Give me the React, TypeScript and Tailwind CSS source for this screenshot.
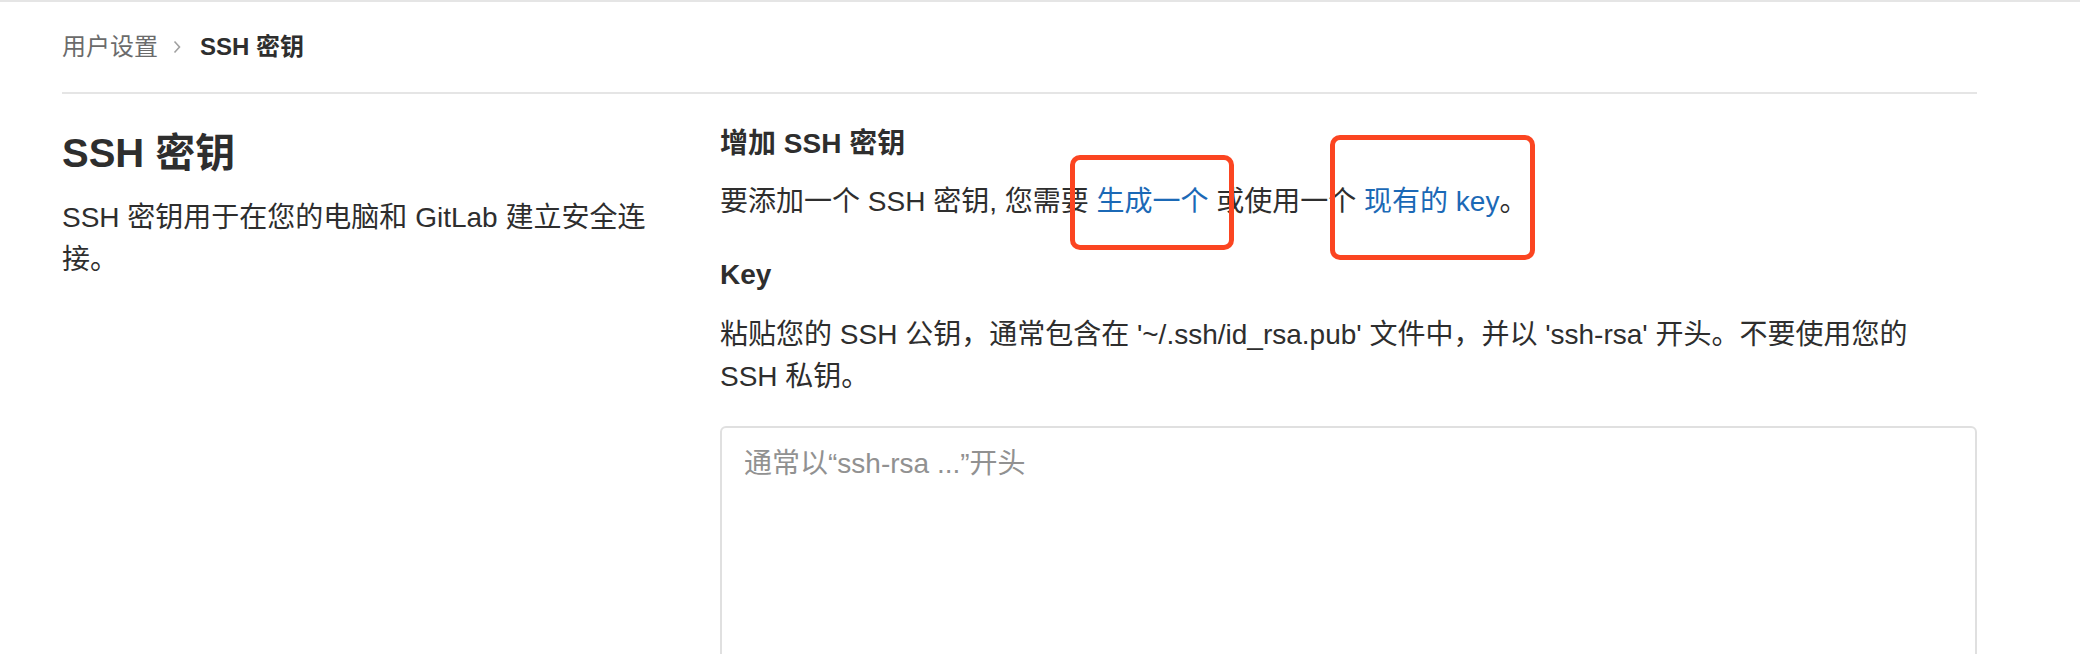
import React from "react";

export default function App() {
  const font = {
    fontFamily: '"Liberation Sans", "Noto Sans CJK SC", sans-serif',
  } as React.CSSProperties;
  return (
    <div
      className="relative w-full min-h-[654px] bg-white border-t-2 border-[#e5e5e5] text-[#2e2e2e]"
      style={font}
    >
      <div className="ml-[62px] w-[1915px]">
        <div className="h-[92px] flex items-center border-b-2 border-[#e5e5e5] text-[24px] leading-[24px]">
          <span className="text-[#6b6b6b]">用户设置</span>
          <svg
            className="ml-[15px] mr-[19px]"
            width="8"
            height="14"
            viewBox="0 0 8 14"
            fill="none"
          >
            <path d="M1.5 1.5 L6.5 7 L1.5 12.5" stroke="#a0a0a0" strokeWidth="1.6" />
          </svg>
          <span className="font-bold text-[#2e2e2e]">SSH 密钥</span>
        </div>
        <div className="flex gap-[60px]">
          <div className="w-[598px] shrink-0">
            <h4 className="mt-[35px] text-[40px] leading-[48px] font-bold">SSH 密钥</h4>
            <p className="mt-[20px] text-[28px] leading-[42px]">
              SSH 密钥用于在您的电脑和 GitLab 建立安全连接。
            </p>
          </div>
          <div className="flex-1 flex flex-col text-[28px] leading-[42px]">
            <div className="mt-[29px] font-bold">增加 SSH 密钥</div>
            <p className="mt-[16px]">
              要添加一个 SSH 密钥, 您需要{" "}
              <a className="text-[#1b69b6]">生成一个</a> 或使用一个{" "}
              <a className="text-[#1b69b6]">现有的 key</a>。
            </p>
            <div className="mt-[31px] font-bold">Key</div>
            <p className="mt-[18px]">
              粘贴您的 SSH 公钥，通常包含在 '~/.ssh/id_rsa.pub' 文件中，并以 'ssh-rsa' 开头。不要使用您的{" "}
              <span className="whitespace-nowrap">SSH 私钥。</span>
            </p>
            <textarea
              className="mt-[28px] h-[260px] w-full border-2 border-[#e0e0e0] rounded-[6px] pl-[22px] pr-[20px] pt-[16px] text-[28px] leading-[40px] text-[#2e2e2e] placeholder:text-[#919191] outline-none resize-none"
              style={font}
              placeholder="通常以“ssh-rsa ...”开头"
            />
          </div>
        </div>
      </div>
      <div className="absolute left-[1070px] top-[153px] w-[164px] h-[95px] border-[5px] border-[#fb4521] rounded-[10px]" />
      <div className="absolute left-[1330px] top-[133px] w-[205px] h-[125px] border-[5px] border-[#fb4521] rounded-[10px]" />
    </div>
  );
}
